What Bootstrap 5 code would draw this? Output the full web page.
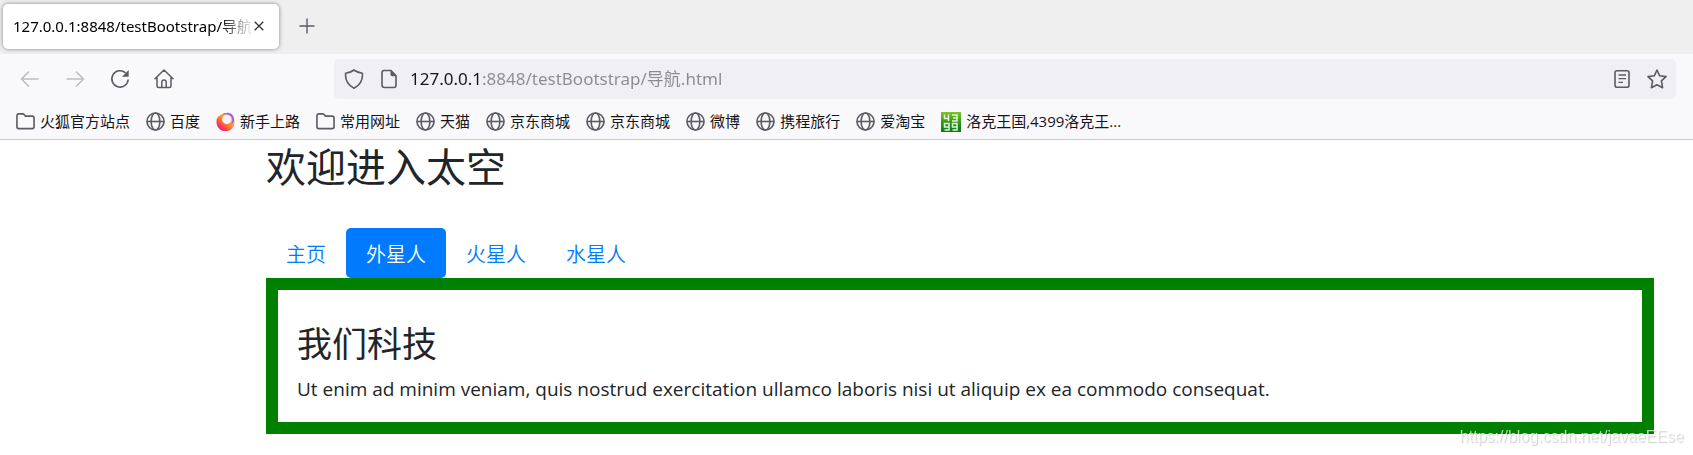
<!DOCTYPE html>
<html lang="zh-CN">
<head>
<meta charset="utf-8">
<meta name="viewport" content="width=device-width, initial-scale=1">
<title>导航</title>
<link href="https://cdn.jsdelivr.net/npm/bootstrap@5.3.0/dist/css/bootstrap.min.css" rel="stylesheet">
<script src="https://cdn.jsdelivr.net/npm/bootstrap@5.3.0/dist/js/bootstrap.bundle.min.js"></script>
<style>
  body { font-family: "Open Sans", "Noto Sans CJK SC", sans-serif; background: #fff; color: #212529; overflow-x: hidden; }
  .ui-btn { background: none; border: 0; padding: 0; color: #5b5b66; line-height: 0; }
  .ui-btn:disabled { color: #bdbdc2; }
  svg { flex: none; }
  .tab-strip { background: #efefef; height: 54px; padding: 3px 3px 5px; }
  .page-tab { background: #fff; width: 276px; height: 45px; border-radius: 5px; box-shadow: 0 0 4px rgba(0,0,0,.45); padding: 0 15px 0 10px; color: #15141a; }
  .tab-title { font: 15px/24px "Noto Sans", "Noto Sans CJK SC", sans-serif; color: #000; width: 241px; white-space: nowrap; -webkit-mask-image: linear-gradient(to left, transparent 0, #000 34px); mask-image: linear-gradient(to left, transparent 0, #000 34px); }
  .toolbar { background: #f9f9fb; border-bottom: 1px solid #ccccd0; }
  .address-row { padding: 5px 17px 0 20px; }
  .nav-tools { width: 314px; gap: 24px; }
  .url-box { background: #f0f0f4; border-radius: 5px; height: 40px; padding: 0 9px 0 10px; color: #5b5b66; }
  .url-input { border: 0; outline: 0; padding: 0; font: 17px/30px "Noto Sans", "Noto Sans CJK SC", sans-serif; color: #8a8a92; -webkit-text-fill-color: transparent; background: linear-gradient(to right, #15141a 77px, #8a8a92 77px); -webkit-background-clip: text; background-clip: text; min-width: 0; }
  .bookmarks { gap: 16px; padding: 11px 16px 6px; height: 40px; }
  .bookmarks a { color: #15141a; font-size: 15px; line-height: 23px; gap: 5px; white-space: nowrap; }
  .bookmarks svg { color: #5b5b66; }
  .page-body { padding: 2px 39px 0 266px; }
  .page-body h1 { font-size: 40px; line-height: 50px; margin-bottom: 36px; font-weight: 400; }
  .page-body .nav-link { font-size: 20px; line-height: 30px; padding: 12px 20px 8px; color: #007bff; border-radius: 5px; font-weight: 350; }
  .page-body .nav-link.active { background: #007bff; color: #fff; }
  .tab-panel { border: 12px solid green; padding: 31px 19px 18px; }
  .tab-panel h3 { font-size: 35px; line-height: 45px; margin-bottom: 8px; font-weight: 400; }
  .tab-panel p { font-size: 19px; line-height: 30px; }
  .watermark { position: fixed; right: 9px; bottom: 8px; font: 16px/20px "Liberation Sans", sans-serif; color: rgba(255,255,255,.7); text-shadow: 1px 1px 1px rgba(0,0,0,.2); }
</style>
</head>
<body>
<svg width="0" height="0" class="d-none" aria-hidden="true">
  <symbol id="globe" viewBox="0 0 20 20"><g fill="none" stroke="currentColor" stroke-width="1.700"><circle cx="10" cy="10" r="9"/><ellipse cx="10" cy="10" rx="4.600" ry="9"/><path d="M1 10h18"/></g></symbol>
  <symbol id="folder" viewBox="0 0 20 20"><path d="M1 15.500V4.200Q1 2 3 2h4q1 0 1.700.800l1.300 1.500h7q2 0 2 2v9.200q0 2-2 2H3q-2 0-2-2z" fill="none" stroke="currentColor" stroke-width="1.700"/></symbol>
</svg>

<header>
  <div class="tab-strip d-flex align-items-center">
    <div class="page-tab d-flex align-items-center justify-content-between">
      <span class="tab-title">127.0.0.1:8848/testBootstrap/导航</span>
      <button class="ui-btn" type="button" aria-label="关闭标签页"><svg width="10" height="10" viewBox="0 0 10 10"><path d="M.7.7l8.600 8.600M9.300.7L.7 9.300" stroke="#333" stroke-width="1.300"/></svg></button>
    </div>
    <button class="ui-btn ms-3 ps-1" type="button" aria-label="新建标签页"><svg width="16" height="16" viewBox="0 0 16 16"><path d="M8 .5v15M.5 8h15" stroke="currentColor" stroke-width="1.400"/></svg></button>
  </div>

  <div class="toolbar">
    <div class="address-row d-flex align-items-center">
      <div class="nav-tools d-flex align-items-center flex-shrink-0">
        <button class="ui-btn" type="button" disabled aria-label="后退"><svg width="21" height="20" viewBox="0 0 21 20" fill="none" stroke="currentColor" stroke-width="1.500"><path d="M18.500 10H2M9 2.500L1.500 10 9 17.500"/></svg></button>
        <button class="ui-btn" type="button" disabled aria-label="前进"><svg width="21" height="20" viewBox="0 0 21 20" fill="none" stroke="currentColor" stroke-width="1.500"><path d="M1.500 10H18M11 2.500l7.500 7.500-7.500 7.500"/></svg></button>
        <button class="ui-btn" type="button" aria-label="刷新"><svg width="20" height="20" viewBox="0 0 20 20"><path d="M18.200 10.500A8.200 8.200 0 1 1 15.500 3.800" fill="none" stroke="currentColor" stroke-width="1.600"/><path d="M18.700 1v6.800H12z" fill="currentColor"/></svg></button>
        <button class="ui-btn" type="button" aria-label="主页"><svg width="20" height="20" viewBox="0 0 20 20" fill="none" stroke="currentColor" stroke-width="1.500" stroke-linejoin="round" stroke-linecap="round"><path d="M1 9.800L10 1l9 8.800M3 8v9q0 1.500 1.500 1.500h11q1.500 0 1.500-1.500V8M7.800 18.300v-5q0-2.200 2.200-2.200t2.200 2.200v5"/></svg></button>
      </div>
      <div class="url-box d-flex align-items-center flex-grow-1">
        <svg width="20" height="20" viewBox="0 0 20 20" fill="none" stroke="currentColor" stroke-width="1.600" stroke-linejoin="round"><path d="M10 1q3.500 2.700 8.400 3.200c.6 6.800-2.400 12-8.400 15C4 16.200 1 11 1.600 4.200 6.500 3.700 10 1 10 1z"/></svg>
        <svg class="ms-3" width="18" height="20" viewBox="0 0 18 20"><path d="M2 4q0-2.500 2-2.500h7L16 6.500V16q0 2.500-2 2.500H4.500Q2 18.500 2 16z" fill="none" stroke="currentColor" stroke-width="1.600"/><path d="M10.500 1.500V5.500q0 1.700 1.700 1.700H16z" fill="currentColor"/></svg>
        <input class="url-input flex-grow-1 ms-2 me-3 ps-1" type="text" value="127.0.0.1:8848/testBootstrap/导航.html" aria-label="地址">
        <button class="ui-btn me-3" type="button" aria-label="阅读模式"><svg width="18" height="20" viewBox="0 0 18 20" fill="none" stroke="currentColor" stroke-width="1.600"><rect x="2" y="1.800" width="14" height="16.400" rx="2"/><path d="M5.500 6H13M5.500 9.700H13M5.500 13.400H10" stroke-width="1.300"/></svg></button>
        <button class="ui-btn" type="button" aria-label="添加书签"><svg width="20" height="20" viewBox="0 0 20 20" fill="none" stroke="currentColor" stroke-width="1.600" stroke-linejoin="round"><path d="M10 1l2.700 5.800 6.300.8-4.600 4.300 1.200 6.800-5.600-3-5.600 3 1.200-6.800L1 7.600l6.300-.8z"/></svg></button>
      </div>
    </div>
    <nav class="bookmarks d-flex align-items-center" aria-label="书签">
      <a class="d-flex align-items-center text-decoration-none" href="#"><svg width="19" height="19"><use href="#folder"/></svg>火狐官方站点</a>
      <a class="d-flex align-items-center text-decoration-none" href="#"><svg width="19" height="19"><use href="#globe"/></svg>百度</a>
      <a class="d-flex align-items-center text-decoration-none" href="#"><svg width="19" height="19" viewBox="0 0 20 20"><defs><linearGradient id="flame" x1=".9" y1=".1" x2=".2" y2=".9"><stop offset="0" stop-color="#ffe14a"/><stop offset=".5" stop-color="#ff8a2b"/><stop offset="1" stop-color="#f5156c"/></linearGradient></defs><path d="M3 4Q4 4.500 4.500 3.500C6 2 8 1.200 10 1.500a8 8 0 0 1 9.500 9A9.500 9.500 0 0 1 .5 11Q.2 7 3 4z" fill="url(#flame)"/><path d="M7 2.800C9-.5 19-.3 19 8c0 3-2 5-3.500 5.500 2.500-3 2.500-9-2.500-10.600Q9.500 1.800 7 2.800z" fill="#a05cf5"/><circle cx="11.300" cy="7.800" r="4.800" fill="#f4efff"/></svg>新手上路</a>
      <a class="d-flex align-items-center text-decoration-none" href="#"><svg width="19" height="19"><use href="#folder"/></svg>常用网址</a>
      <a class="d-flex align-items-center text-decoration-none" href="#"><svg width="19" height="19"><use href="#globe"/></svg>天猫</a>
      <a class="d-flex align-items-center text-decoration-none" href="#"><svg width="19" height="19"><use href="#globe"/></svg>京东商城</a>
      <a class="d-flex align-items-center text-decoration-none" href="#"><svg width="19" height="19"><use href="#globe"/></svg>京东商城</a>
      <a class="d-flex align-items-center text-decoration-none" href="#"><svg width="19" height="19"><use href="#globe"/></svg>微博</a>
      <a class="d-flex align-items-center text-decoration-none" href="#"><svg width="19" height="19"><use href="#globe"/></svg>携程旅行</a>
      <a class="d-flex align-items-center text-decoration-none" href="#"><svg width="19" height="19"><use href="#globe"/></svg>爱淘宝</a>
      <a class="d-flex align-items-center text-decoration-none" href="#"><svg width="20" height="20" viewBox="0 0 20 20"><defs><linearGradient id="leaf" x2="0" y2="1"><stop offset="0" stop-color="#7cc52c"/><stop offset=".5" stop-color="#35961e"/><stop offset="1" stop-color="#087a16"/></linearGradient></defs><rect width="20" height="20" fill="url(#leaf)"/><path d="M3.500 2.500v4H8M7.500 2.500V9M11 3h5v6h-5M12 6h4M3.500 18H8v-6.500H3.500V15H8M11.500 18H16v-6.500h-4.500V15H16" fill="none" stroke="#e5f3d8" stroke-width="1.500"/></svg>洛克王国,4399洛克王...</a>
    </nav>
  </div>
</header>

<main class="page-body">
  <h1>欢迎进入太空</h1>
  <ul class="nav nav-pills" role="tablist">
    <li class="nav-item"><a class="nav-link" href="#home" data-bs-toggle="pill">主页</a></li>
    <li class="nav-item"><a class="nav-link active" href="#alien" data-bs-toggle="pill">外星人</a></li>
    <li class="nav-item"><a class="nav-link" href="#mars" data-bs-toggle="pill">火星人</a></li>
    <li class="nav-item"><a class="nav-link" href="#mercury" data-bs-toggle="pill">水星人</a></li>
  </ul>
  <section class="tab-panel" id="alien">
    <h3>我们科技</h3>
    <p class="mb-0">Ut enim ad minim veniam, quis nostrud exercitation ullamco laboris nisi ut aliquip ex ea commodo consequat.</p>
  </section>
</main>
<div class="watermark">https://blog.csdn.net/javaeEEse</div>
</body>
</html>
